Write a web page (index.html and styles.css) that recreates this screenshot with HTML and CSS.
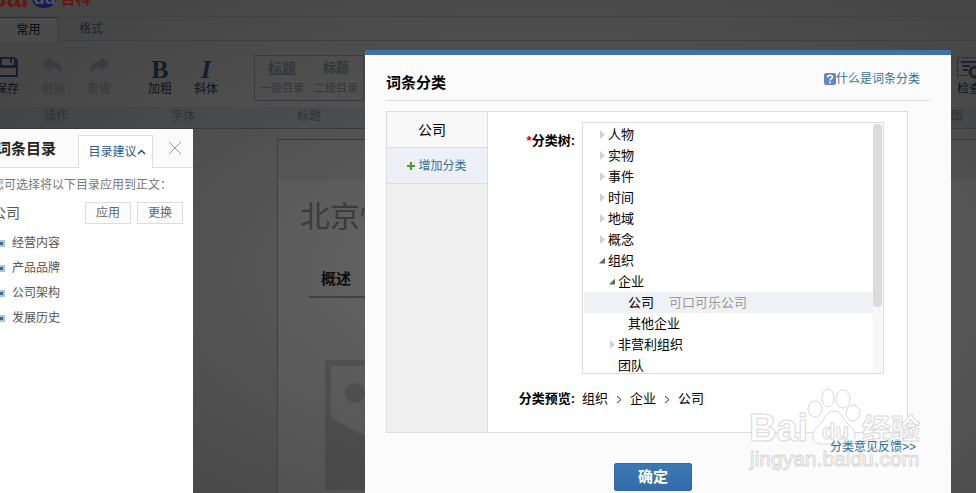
FILE: index.html
```html
<!DOCTYPE html>
<html lang="zh-CN">
<head>
<meta charset="utf-8">
<title>词条分类</title>
<link rel="stylesheet" href="styles.css">
</head>
<body>
<div class="editor">
  <header class="brand"><span class="brand-red">Bai</span><span class="brand-blue">du</span><span class="brand-cn">百科</span></header>
  <nav class="tabs">
    <button class="tab tab-active">常用</button>
    <button class="tab">格式</button>
  </nav>
  <div class="toolbar">
    <section class="group group-ops">
      <div class="tools">
        <button class="tool"><svg width="22" height="22" viewBox="-1 1 22 22"><path fill="#151f30" fill-rule="evenodd" d="M1 1h17l3 3v17H1zM5 3v6h12V3h-2v4h-2V3zM3 12v7h16v-7z"/></svg>保存</button>
        <button class="tool tool-off"><svg width="22" height="22" viewBox="0 0 22 22"><path fill="#393c40" d="M1 7L9 0v4c7 0 12 5 10 12c-2-4-5-5-10-5v4z"/></svg>撤销</button>
        <button class="tool tool-off"><svg width="22" height="22" viewBox="0 0 22 22"><path fill="#393c40" d="M21 7L13 0v4C6 4 1 9 3 16c2-4 5-5 10-5v4z"/></svg>重做</button>
      </div>
      <div class="group-name">操作</div>
    </section>
    <section class="group group-font">
      <div class="tools">
        <button class="tool"><b class="glyph">B</b>加粗</button>
        <button class="tool"><i class="glyph">I</i>斜体</button>
      </div>
      <div class="group-name">字体</div>
    </section>
    <section class="group group-heading">
      <div class="tools headings">
        <button class="heading"><b class="level-one">标题</b>一级目录</button>
        <button class="heading"><b class="level-two">标题</b>二级目录</button>
      </div>
      <div class="group-name">标题</div>
    </section>
    <section class="group group-check">
      <div class="tools">
        <button class="tool"><svg width="28" height="22" viewBox="0 0 28 22"><path fill="none" stroke="#15181d" stroke-dasharray="1 1" d="M.5 19V.5H27M1 18.500h10"/><path stroke="#1b222d" stroke-width="2" d="M4 5h20M5 9h8M6 13h5"/><circle cx="18" cy="15" r="5" fill="none" stroke="#1b222d" stroke-width="3"/></svg>检查</button>
      </div>
      <div class="group-name">图</div>
    </section>
  </div>
  <main class="paper">
    <h1 class="entry-title">北京怡</h1>
    <h2 class="entry-summary">概述</h2>
    <svg class="portrait" width="120" height="130" viewBox="0 0 120 130"><path fill="#000" fill-opacity=".13" fill-rule="evenodd" d="M0 0h120v130H0zM6 6v52l32 17h44l32-17V6z"/><circle cx="30" cy="33" r="10" fill="#000" fill-opacity=".13"/></svg>
  </main>
</div>

<aside class="suggest">
  <div class="suggest-head">
    <h2 class="suggest-title">词条目录</h2>
    <button class="suggest-tab">目录建议<svg width="9" height="6" viewBox="0 0 9 6"><path fill="none" stroke="#2b4d73" stroke-width="1.500" d="M1 5l3.500-3.500L8 5"/></svg></button>
    <button class="close" aria-label="关闭"><svg width="14" height="14" viewBox="0 0 14 14"><path stroke="#999" d="M1 1l12 12M13 1L1 13"/></svg></button>
  </div>
  <p class="hint">您可选择将以下目录应用到正文：</p>
  <div class="choice"><span class="choice-name">公司</span><button class="small-button">应用</button><button class="small-button">更换</button></div>
  <ul class="outline">
    <li>经营内容</li>
    <li>产品品牌</li>
    <li>公司架构</li>
    <li>发展历史</li>
  </ul>
</aside>

<div class="dialog" role="dialog" aria-labelledby="dialog-title">
  <header class="dialog-head">
    <h2 id="dialog-title">词条分类</h2>
    <a class="help" href="#"><svg width="12" height="12" viewBox="0 0 12 12"><rect width="12" height="12" rx="2" fill="#6485c0"/><path fill="none" stroke="#fff" stroke-width="1.500" d="M3.500 4.500C3.500 1.500 8.500 1.500 8.500 4C8.500 6 6 5.500 6 7.500M6 8.500v2"/></svg>什么是词条分类</a>
  </header>
  <div class="panel">
    <div class="categories">
      <button class="category">公司</button>
      <button class="category-add"><svg width="8" height="8" viewBox="0 0 8 8"><path stroke="#4d9e16" stroke-width="2" d="M0 4h8M4 0v8"/></svg>增加分类</button>
    </div>
    <div class="fields">
      <div class="field">
        <span class="label"><span class="required">*</span>分类树:</span>
        <div class="tree-box">
          <ul class="tree">
            <li class="node closed">人物</li>
            <li class="node closed">实物</li>
            <li class="node closed">事件</li>
            <li class="node closed">时间</li>
            <li class="node closed">地域</li>
            <li class="node closed">概念</li>
            <li class="node open">组织</li>
            <li class="node open depth-two">企业</li>
            <li class="node depth-three selected">公司<span class="note">可口可乐公司</span></li>
            <li class="node depth-three">其他企业</li>
            <li class="node closed depth-two">非营利组织</li>
            <li class="node depth-two">团队</li>
          </ul>
          <div class="track"><div class="thumb"></div></div>
        </div>
      </div>
      <div class="field preview">
        <span class="label">分类预览:</span>
        <div class="path"><span>组织</span><svg width="6" height="9" viewBox="0 0 6 9"><path fill="none" stroke="#333" d="M1 1l4 3.500L1 8"/></svg><span>企业</span><svg width="6" height="9" viewBox="0 0 6 9"><path fill="none" stroke="#333" d="M1 1l4 3.500L1 8"/></svg><span>公司</span></div>
      </div>
    </div>
  </div>
  <a class="feedback" href="#">分类意见反馈&gt;&gt;</a>
  <button class="confirm">确定</button>
</div>

<svg class="watermark" width="180" height="90" viewBox="0 0 180 90">
  <g fill="#fff" stroke="#d9d9d9" stroke-linejoin="round">
    <ellipse cx="68" cy="22" rx="7" ry="8"/>
    <ellipse cx="81" cy="11" rx="6" ry="9"/>
    <ellipse cx="96" cy="12" rx="7" ry="9"/>
    <ellipse cx="106" cy="26" rx="7" ry="8"/>
    <path d="M87 24c8 0 9 9 15 14c9 7 8 18-2 19c-5 1-8-1-13-1s-8 2-13 1c-10-1-11-12-2-19c6-5 7-14 15-14z"/>
    <text class="wm-logo" x="2" y="54">Bai</text>
    <text class="wm-du" x="75" y="52">du</text>
    <text class="wm-cn" x="115" y="53">经验</text>
    <text class="wm-url" x="3" y="79">jingyan.baidu.com</text>
  </g>
</svg>
</body>
</html>
```
FILE: styles.css
```css
*, *::before { box-sizing: border-box; }
html { height: 100%; }
body {
  margin: 0;
  height: 100%;
  position: relative;
  overflow: hidden;
  background: radial-gradient(ellipse at 55% 55%, #606060, #464646 85%);
  font: 12px/20px "Liberation Sans", "Noto Sans CJK SC", sans-serif;
  color: #000;
}
h1, h2, p, ul { margin: 0; padding: 0; }
ul { list-style: none; }
button {
  margin: 0;
  padding: 0;
  border: 0;
  background: none;
  color: inherit;
  font: inherit;
  cursor: pointer;
  white-space: nowrap;
}
a { text-decoration: none; }
svg { flex: none; }

/* Dimmed editor */
.editor { display: flex; flex-direction: column; height: 100%; }
.brand {
  display: flex;
  align-items: flex-end;
  gap: 4px;
  flex: none;
  height: 16px;
  margin-left: -12px;
  padding-bottom: 8px;
  font-weight: bold;
  font-size: 26px;
  line-height: 20px;
}
.brand-red, .brand-cn { color: #651615; }
.brand-blue {
  padding: 0 1px;
  border-radius: 10px;
  background: #171c58;
  color: #555;
  font-size: 18px;
}
.brand-cn { font-size: 15px; line-height: 18px; }
.tabs {
  display: flex;
  flex: none;
  height: 25px;
  border-top: 1px solid #3f4144;
  border-bottom: 1px solid #3d3f42;
}
.tab { width: 66px; color: #1b2533; }
.tab-active {
  width: 58px;
  height: 25px;
  border-top: 1px solid #1a3050;
  border-right: 1px solid #3d3f42;
  background: #4b4b4b;
  color: #05080d;
}
.toolbar {
  display: flex;
  flex: none;
  height: 88px;
  border-bottom: 1px solid #393b3e;
  background: linear-gradient(transparent 66px, rgba(30, 40, 50, .12) 66px);
}
.group { display: flex; flex-direction: column; }
.tools { display: flex; justify-content: center; height: 66px; padding-top: 16px; }
.group-name { color: #303235; line-height: 18px; text-align: center; }
.group-ops { width: 144px; margin-left: -16px; }
.group-ops .tools { justify-content: flex-start; }
.group-font { width: 110px; }
.group-heading { width: 110px; margin-left: 16px; }
.group-check { width: 25px; margin-left: auto; overflow: hidden; }
.group-check .tools { justify-content: flex-start; }
.group-check .group-name { text-align: left; }
.tool {
  display: flex;
  flex-direction: column;
  align-items: center;
  width: 46px;
  height: 44px;
  color: #0e141d;
}
.group-check .tool { align-items: flex-start; width: 25px; padding-left: 6px; flex: none; }
.tool-off { color: #383a3d; }
.glyph { height: 22px; color: #141d2c; font: bold 26px/26px "Liberation Serif", serif; }
i.glyph { font-style: italic; }
.headings { height: 46px; margin: 14px 0 6px; padding: 0; border: 1px solid #383a3e; }
.heading { display: flex; flex: 1; flex-direction: column; align-items: center; justify-content: center; color: #34363a; font-size: 11px; }
.level-one { font-size: 14px; text-decoration: underline; }
.level-two { font-size: 13px; }
.paper {
  flex: 1;
  margin: 10px 0 0 277px;
  padding-left: 22px;
  overflow: hidden;
  border-top: 1px solid #3a3a3a;
  border-left: 1px solid #414141;
  background: linear-gradient(rgba(255, 255, 255, .01) 40px, rgba(255, 255, 255, .04) 40px);
}
.entry-title { padding-top: 56px; color: #3b3b3b; font-size: 30px; line-height: 42px; font-weight: normal; }
.entry-summary {
  margin: 29px 40px 0 9px;
  padding: 0 0 5px 12px;
  border-bottom: 2px solid #414141;
  color: #0d0d0d;
  font-size: 15px;
  line-height: 24px;
}
.portrait { display: block; margin: 62px 0 0 25px; }

/* Outline suggestions */
.suggest {
  position: absolute;
  top: 129px;
  bottom: 0;
  left: -16px;
  width: 209px;
  background: #fff;
  color: #555;
}
.suggest-head { display: flex; height: 39px; padding-left: 12px; border-bottom: 1px solid #ddd; background: #fbfbfb; }
.suggest-title { flex: none; width: 82px; color: #222; font-size: 15px; line-height: 40px; }
.suggest-tab {
  display: flex;
  align-items: center;
  justify-content: center;
  flex: none;
  width: 75px;
  height: 33px;
  margin-top: 6px;
  padding-left: 3px;
  border: 1px solid #ddd;
  border-bottom: 0;
  background: #fff;
  color: #2b5a8c;
}
.close { flex: 1; height: 38px; padding-left: 4px; }
.close svg { display: block; margin: 0 auto; }
.hint { padding: 7px 0 0 8px; color: #777; white-space: nowrap; }
.choice { display: flex; align-items: center; gap: 6px; height: 36px; padding: 0 10px 0 8px; }
.choice-name { margin-right: auto; font-size: 14px; }
.small-button { width: 46px; height: 22px; border: 1px solid #ddd; background: #fcfcfc; color: #666; line-height: 18px; }
.outline { padding-left: 14px; line-height: 25px; }
.outline li { display: flex; align-items: center; gap: 7px; }
.outline li::before { content: ""; width: 7px; height: 7px; border: 2px solid #a9c3da; background: #44698c; }

/* Category dialog */
.dialog {
  position: absolute;
  top: 50px;
  right: 25px;
  bottom: 0;
  left: 365px;
  display: flex;
  flex-direction: column;
  padding: 0 21px;
  border-top: 5px solid #3c71ab;
  background: #fbfbfb;
}
.dialog-head {
  display: flex;
  justify-content: space-between;
  flex: none;
  height: 46px;
  border-bottom: 1px solid #ddd;
}
.dialog-head h2 { font-size: 15px; line-height: 56px; }
.help { display: flex; align-items: center; height: 48px; padding-right: 10px; color: #3b6f94; }
.panel { display: flex; flex: none; margin: 10px 22px 0 0; border: 1px solid #ddd; background: #fff; }
.categories { width: 101px; border-right: 1px solid #ddd; background: #f0f0f0; }
.category, .category-add { display: flex; align-items: center; justify-content: center; width: 100%; height: 36px; border-bottom: 1px solid #d5dfe8; }
.category { padding-right: 10px; background: #f8f8f8; font-size: 14px; }
.category-add { gap: 3px; background: #edf1f7; color: #3b6f94; }
.fields { flex: 1; padding: 10px 23px 14px 0; font-size: 13px; }
.field { display: flex; gap: 7px; }
.label { width: 87px; font-size: 13px; font-weight: bold; line-height: 38px; text-align: right; white-space: nowrap; }
.required { color: #d00; }
.tree-box { display: flex; flex: 1; height: 252px; padding: 1px 0 0 1px; border: 1px solid #ddd; overflow: hidden; }
.tree { flex: 1; }
.node { display: flex; align-items: center; height: 21px; padding-left: 16px; }
.node::before { content: ""; width: 5px; height: 9px; margin-right: 3px; }
.closed::before { background: #d2d2d2; clip-path: polygon(0 0, 100% 50%, 0 100%); }
.open { padding-left: 15px; }
.open::before { width: 6px; height: 6px; background: #666; clip-path: polygon(100% 0, 100% 100%, 0 100%); }
.depth-two { padding-left: 26px; }
.open.depth-two { padding-left: 25px; }
.depth-three { padding-left: 36px; }
.selected { background: #f0f1f5; }
.note { margin-left: 15px; color: #999; }
.track { width: 10px; height: 249px; background: #f8f8f8; }
.thumb { width: 9px; height: 183px; border-radius: 4px; background: #dcdcdc; }
.preview { padding-top: 6px; }
.path { display: flex; align-items: center; gap: 8px; height: 38px; }
.feedback { position: relative; z-index: 2; align-self: flex-end; flex: none; margin-top: 4px; padding-right: 14px; color: #2f6f8f; }
.confirm {
  align-self: center;
  flex: none;
  width: 78px;
  height: 28px;
  margin: 6px 10px 0 0;
  border: 1px solid #3469a3;
  border-radius: 2px;
  background: linear-gradient(#3c78b5, #336da9);
  color: #fff;
  font-size: 15px;
  font-weight: bold;
  line-height: 26px;
}

.watermark {
  position: absolute;
  z-index: 1;
  left: 747px;
  top: 387px;
  pointer-events: none;
  font-family: "Liberation Sans", "Noto Sans CJK SC", sans-serif;
}
.wm-logo { font-size: 38px; font-weight: bold; }
.wm-du { font-size: 22px; font-weight: bold; }
.wm-cn { font-size: 29px; font-weight: bold; }
.wm-url { font-size: 21px; }
```
